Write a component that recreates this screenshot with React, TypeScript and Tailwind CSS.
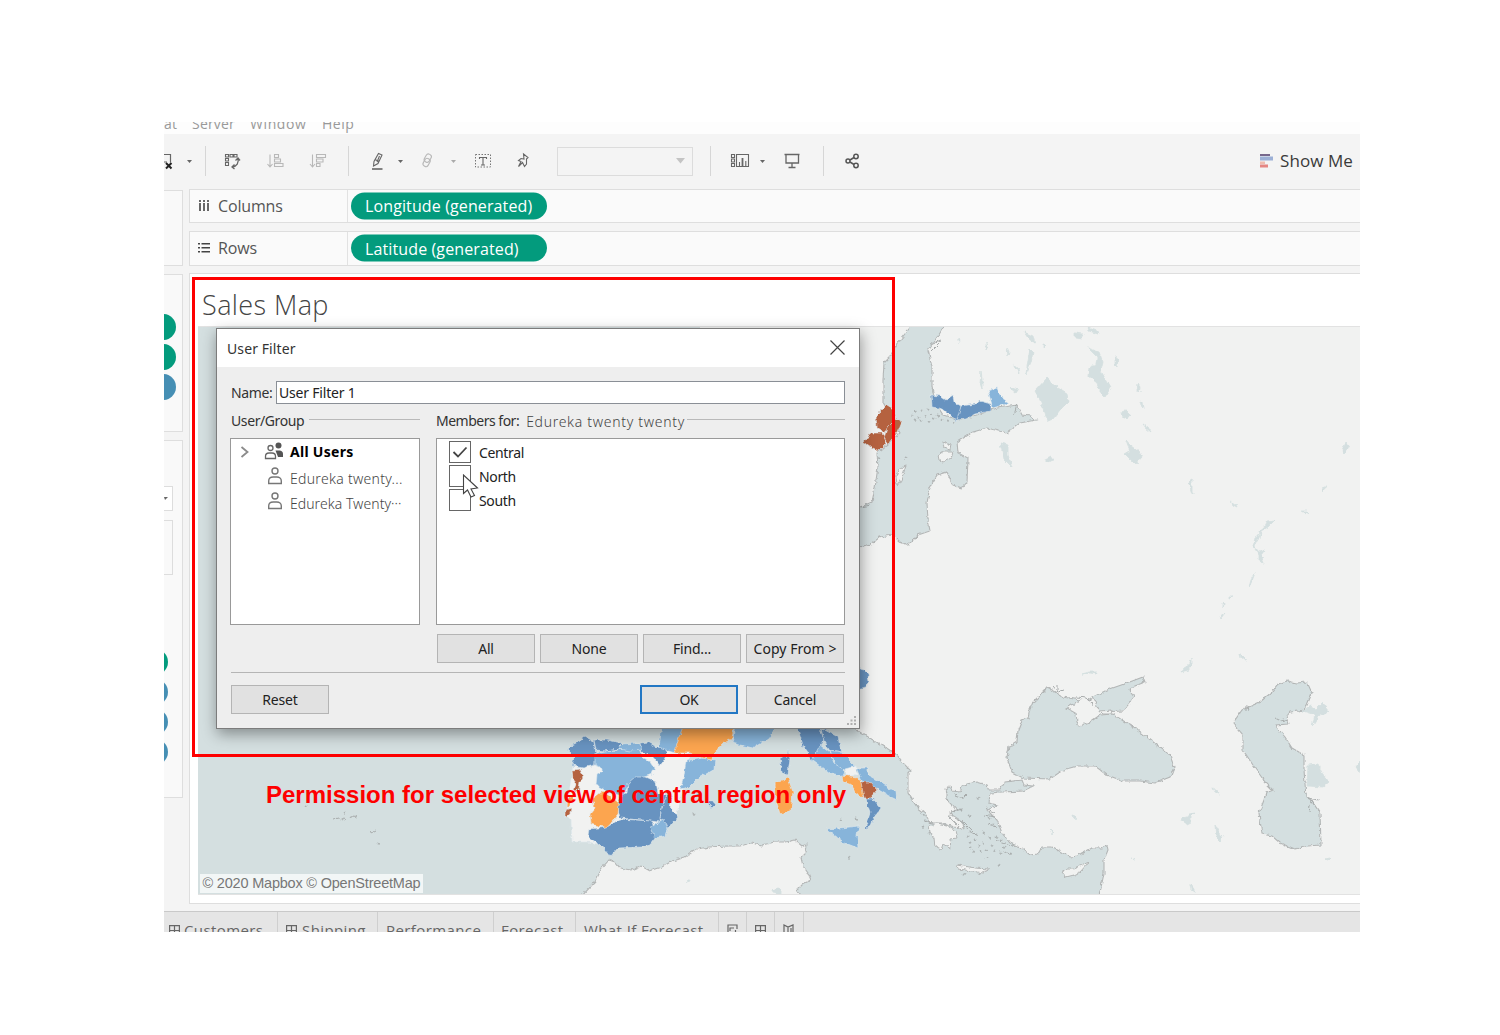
import React from "react";

const WATER = "#d4dfe0";
const LAND = "#f1f2f1";
const DARK = "#6893c0";
const LIGHT = "#87b4da";
const ORANGE = "#fca550";
const BROWN = "#b5623f";

const seas = [
  // Atlantic and Mediterranean
  "M180,600 L840,700 840,722 857,730 873,740 885,747 897,755 904,764 910,770 908,773 908,793 917,807 925,813 930,823 943,823 953,827 963,828 962,822 955,818 950,813 957,811 952,805 947,800 947,792 946,789 950,786 952,791 960,792 963,785 977,782 987,785 988,790 1000,790 1005,782 1022,780 1024,785 1033,786 1023,791 1003,792 990,793 989,803 997,805 987,810 997,820 1002,833 1010,843 1022,848 1030,855 1038,854 1042,847 1052,847 1063,853 1070,857 1077,856 1092,848 1102,848 1107,845 1108,850 1104,860 1104,873 1102,883 1098,900 805,900 797,890 803,884 811,880 808,873 803,866 801,858 806,853 807,844 802,846 795,840 786,842 775,842 762,845 751,843 740,846 726,846 710,847 697,849 685,857 672,861 662,867 650,871 641,866 632,870 620,868 615,862 609,860 602,868 595,882 580,898 L180,910 Z",
  // Baltic and Gulf of Finland
  "M913,324 L900,340 890,357 884,363 883,380 883,402 890,415 900,433 887,445 877,453 878,467 875,487 872,502 860,507 840,510 840,552 860,548 870,545 880,537 893,535 900,542 908,545 918,535 930,531 928,520 927,503 930,487 937,475 947,472 953,485 962,488 967,482 968,458 958,453 957,442 973,432 987,428 1007,433 1020,423 1036,420 1030,416 1022,415 1017,405 997,408 983,413 960,420 943,415 935,402 932,387 932,367 928,350 940,333 945,324 Z",
  // Black Sea
  "M1047,688 L1033,702 1030,709 1028,718 1022,720 1018,730 1017,742 1009,747 1007,758 1012,772 1023,778 1050,779 1063,770 1077,766 1095,766 1107,775 1123,781 1140,781 1155,783 1170,777 1174,767 1170,755 1157,745 1138,730 1122,720 1113,714 1100,715 1090,722 1080,726 1077,722 1076,713 1067,708 1080,700 1063,697 1055,692 Z",
  // Sea of Azov
  "M1093,697 L1107,690 1127,683 1143,677 1145,682 1135,686 1129,690 1134,697 1128,705 1123,711 1100,712 Z",
  // Caspian Sea
  "M1287,681 L1297,683 1307,682 1312,693 1305,710 1290,712 1287,716 1289,724 1275,725 1285,737 1292,748 1304,755 1304,770 1306,797 1311,800 1320,813 1321,845 1308,846 1295,849 1280,843 1272,836 1262,834 1259,813 1264,800 1266,793 1273,790 1265,782 1253,765 1243,750 1243,735 1233,723 1242,710 1260,702 1272,692 1277,685 Z",
];

const lakes = [
  "M1047,378 L1057,387 1067,393 1068,402 1060,410 1053,419 1048,421 1044,410 1040,400 1035,391 Z",
  "M1088,348 L1099,352 1103,362 1101,371 1106,380 1111,388 1105,397 1101,393 1097,383 1088,376 1089,368 1096,364 1097,357 Z",
  "M1000,443 L1008,445 1008,455 1012,467 1004,459 Z",
  "M1045,459 L1051,456 1054,460 1047,462 Z",
  "M1075,333 L1083,334 1081,339 1075,338 Z M1088,327 L1098,331 1099,334 1089,331 Z",
  "M1024,332 L1033,336 1035,344 1028,338 Z M1030,349 L1033,352 1031,362 1026,374 1028,360 Z M1007,347 l2,5 -1,4 Z M1013,364 l6,5 1,4 Z M1009,387 l9,3 -2,3 Z",
  "M981,371 l1,8 0,10 -2,-6 Z M959,339 l1,2 -1,2 Z M986,343 l1,5 -1,2 Z M1043,344 l3,1 -3,3 Z M1115,358 l3,1 -1,8 -2,-3 Z",
  "M1138,384 l2,3 -1,5 -2,-1 Z M1140,401 l3,2 1,6 -3,-4 Z M1121,412 l5,-1 4,4 -3,4 -5,-2 Z M1143,424 l5,3 3,5 -5,-4 Z",
  "M1126,440 L1132,447 1139,452 1142,457 1136,464 1131,460 1125,454 1130,451 Z",
  "M1190,479 l2,1 0,12 1,3 -2,-3 -2,-9 Z M1231,501 l5,4 1,2 -4,-2 Z",
  "M1346,442 l3,4 -3,6 -2,2 -2,-3 2,-4 Z M1322,488 l5,-2 -3,2 -2,4 Z M1301,511 l6,0 2,3 -5,-2 Z",
  "M1275,520 l-8,1 -3,6 -5,4 1,4 -5,3 -2,8 4,6 2,3 0,6 5,2 -3,-8 4,-5 -6,2 -5,-6 2,-5 4,-3 1,-7 7,-4 Z",
  "M1255,573 l-4,7 -2,7 3,-6 Z M1229,596 l4,0 -4,2 Z M1223,603 l1,1 -1,4 Z M1220,616 l5,-3 -4,5 Z M1240,653 l5,5 1,3 -5,-4 Z",
  "M1192,657 l-3,8 -5,3 -3,4 7,-2 4,-6 Z M1308,765 L1318,764 1322,773 1329,782 1323,787 1307,786 Z",
  "M1303,711 L1311,706 1316,709 1322,703 1329,712 1318,716 1312,726 1315,715 Z M1361,760 l-5,7 5,7 Z",
  "M1213,788 l5,3 2,3 -5,-2 Z M1182,818 l5,-1 2,-3 6,-1 -4,4 0,5 -4,2 -6,-4 Z M1215,825 l3,5 5,8 -3,3 -4,-4 Z M1190,884 l4,5 0,3 -3,-2 Z",
  "M1082,674 l7,-2 8,0 -1,2 -6,-1 Z M1073,815 l3,1 -1,4 Z M1050,829 l3,3 -1,2 Z M1131,858 l4,2 Z M1325,859 l5,-1 -2,2 Z M772,890 l6,-2 3,3 0,4 -8,-2 Z M687,881 l3,-2 -1,3 Z",
];

const islands = [
  "M929,826 L937,823 947,825 955,831 957,838 950,839 951,849 943,844 941,850 935,847 934,838 930,832 Z",
  "M957,865 L964,866 975,868 989,869 983,873 972,871 958,869 Z",
  "M1062,872 L1067,869 1073,869 1089,862 1080,872 1074,875 1066,877 Z",
  "M938,455 l6,-4 9,0 -2,7 -7,4 -5,-2 Z M943,442 l8,3 -1,5 -6,-2 Z M898,470 l8,-4 -5,14 -4,6 -1,-10 Z",
  "M1100,711 l12,-1 -1,4 -8,0 Z",
  "M948,816 l6,0 9,6 1,8 -5,-3 Z",
];

const regions: [string, string][] = [
  [LAND, "M573,765 L583,767 595,763 620,748 690,745 688,770 683,790 676,817 655,837 618,847 587,842 572,842 571,820 566,815 Z"],
  [DARK, "M567,750 L572,745 580,741 585,737 594,742 596,753 595,765 583,768 572,766 574,757 Z"],
  [DARK, "M594,740 L607,740 622,743 619,749 605,751 596,750 Z"],
  [LIGHT, "M595,753 L605,751 617,750 628,748 641,750 642,757 651,762 655,768 652,774 637,780 628,786 623,796 610,793 596,785 597,775 602,772 600,767 595,765 Z"],
  [LIGHT, "M619,749 L622,744 638,743 643,750 630,751 Z"],
  [DARK, "M640,743 L648,742 655,746 667,750 666,757 660,766 653,757 642,752 Z"],
  [DARK, "M628,783 L635,777 645,777 656,782 658,793 667,795 661,812 660,822 640,820 620,818 617,805 622,795 627,793 Z"],
  [ORANGE, "M592,799 L603,791 612,798 619,804 618,815 607,828 591,824 590,814 595,808 Z"],
  [DARK, "M589,829 L607,827 620,819 652,821 656,837 650,845 643,847 618,848 610,857 602,846 588,837 Z"],
  [DARK, "M667,794 L673,796 669,806 678,817 668,829 660,818 662,808 Z"],
  [LIGHT, "M650,828 L663,819 668,829 666,836 655,838 Z"],
  [LIGHT, "M686,761 L703,758 715,760 714,769 697,779 689,787 680,789 684,775 Z"],
  [LIGHT, "M662,724 L687,724 679,740 675,753 659,748 Z"],
  [ORANGE, "M684,724 L734,724 732,739 722,744 715,752 711,760 703,758 690,753 674,753 678,740 Z"],
  [LIGHT, "M735,726 L778,724 768,739 753,748 740,745 732,743 Z"],
  [DARK, "M796,724 L820,728 824,740 819,752 812,760 804,748 Z"],
  [DARK, "M821,728 L838,737 842,753 830,751 824,742 Z"],
  [LIGHT, "M820,745 L830,753 834,763 843,768 844,777 830,774 820,766 812,760 Z"],
  [LIGHT, "M830,751 L842,753 856,767 846,771 835,764 Z"],
  [LAND, "M845,769 L856,766 857,774 847,777 Z"],
  [LIGHT, "M856,768 L868,768 868,775 882,783 896,792 897,800 889,796 877,789 862,781 Z"],
  [ORANGE, "M842,775 L857,777 864,785 864,798 855,793 852,785 843,782 Z"],
  [BROWN, "M861,782 L870,782 877,790 870,798 864,798 Z"],
  [DARK, "M865,799 L873,799 881,808 874,818 871,826 865,829 870,813 Z"],
  [LIGHT, "M826,829 L840,828 859,826 857,835 858,848 845,843 Z"],
  [ORANGE, "M775,783 L788,778 793,792 791,811 780,814 776,800 Z"],
  [DARK, "M780,758 L787,756 788,749 790,758 788,775 782,773 Z"],
  [DARK, "M707,803 L713,800 716,804 712,808 Z M696,795 l4,-2 0,3 Z"],
  [BROWN, "M572,770 L582,769 580,774 583,777 580,782 579,790 574,791 576,783 573,779 Z M565,810 L571,808 570,814 565,818 Z"],
  [ORANGE, "M568,797 L574,797 570,806 567,806 Z"],
  [DARK, "M856,668 L864,670 868,674 869,682 866,687 856,689 Z"],
  [BROWN, "M876,416 L887,405 892,408 895,417 890,428 884,432 877,428 Z"],
  [BROWN, "M863,441 L872,433 883,433 886,444 879,451 871,447 Z"],
  [BROWN, "M887,428 L897,418 902,422 898,432 892,439 888,444 884,438 Z"],
  [DARK, "M931,395 L940,396 946,400 953,395 954,402 961,406 960,413 957,421 950,415 943,409 932,407 Z"],
  [DARK, "M961,406 L975,404 980,401 991,404 991,411 975,414 966,419 957,420 Z"],
  [LIGHT, "M988,391 L997,388 1001,397 1009,403 993,408 Z"],
];

// Small islets scattered along the coasts
const specks: [number, number][] = [
  [911, 415], [915, 411], [918, 417], [921, 410], [924, 416], [927, 408], [930, 414], [933, 418], [937, 415], [941, 419], [914, 419], [920, 420], [928, 421],
  [947, 420], [952, 422], [905, 457], [967, 836], [970, 842], [974, 839], [978, 846], [982, 843], [972, 850], [985, 850], [976, 834], [966, 828], [970, 832],
  [988, 838], [991, 845], [994, 850], [999, 852], [983, 832], [980, 851], [969, 847], [992, 823], [988, 818], [977, 798], [968, 815], [962, 797], [960, 809],
  [996, 836], [1000, 840], [1003, 847], [1009, 853], [986, 857], [998, 864], [978, 873], [963, 874], [305, 806], [343, 812], [350, 817], [378, 843],
  [693, 814], [848, 857], [840, 819], [855, 818], [1012, 845], [925, 820], [922, 826], [928, 832],
];

const openSans = "font-['Open_Sans',sans-serif]";

function SalesMap() {
  return (
    <svg className="block h-[567px] w-[1162px]" viewBox="198 327 1162 567">
      <defs>
        <filter id="coast" x="0" y="0" width="100%" height="100%">
          <feTurbulence type="fractalNoise" baseFrequency="0.22" numOctaves="2" seed="4" />
          <feDisplacementMap in="SourceGraphic" scale="4.5" xChannelSelector="R" yChannelSelector="G" />
        </filter>
      </defs>
      <rect x="198" y="327" width="1162" height="567" fill={LAND} />
      <g filter="url(#coast)">
        {seas.map((d, i) => (
          <path key={i} d={d} fill={WATER} stroke="#b3b6b6" strokeWidth="1.1" />
        ))}
        {lakes.map((d, i) => (
          <path key={i} d={d} fill={WATER} stroke={WATER} strokeWidth="0.8" />
        ))}
        {islands.map((d, i) => (
          <path key={i} d={d} fill={LAND} stroke="#b3b6b6" strokeWidth="1" />
        ))}
        {specks.map(([x, y], i) => (
          <path key={i} d={`M${x},${y}l2,0.5l-1,1.2z`} fill="#e4e8e8" stroke="#a4a9a9" strokeWidth="0.8" />
        ))}
        {regions.map(([fill, d], i) => (
          <path key={i} d={d} fill={fill} stroke="#dfe9ef" strokeWidth="0.6" />
        ))}
        <path
          d="M334,819l4,-1l3,2l4,-2 M351,817l3,-1l2,1 M369,831l3,2l4,-2 M1076,697l10,1l7,2 M1088,699l6,8 M1053,686l5,6l6,-2 M1057,684v8 M1243,708l5,-2l1,5 M1246,705v6 M1307,798l12,2 M1309,812l2,-12l4,6 M1275,718l6,3l8,-2 M952,812l10,-3 M955,818l9,5l12,12 M986,808l9,5 M985,815l10,2 M988,824l9,3 M996,840l14,6 M1002,851l8,3 M920,813l6,4 M924,820l8,3 M913,800l6,8 M955,795l8,3l4,-4 M929,345l12,-5 M931,352l8,-8 M871,505l-10,2 M877,455l3,4 M1017,405l-3,10"
          fill="none"
          stroke="#a7abab"
          strokeWidth="1"
        />
      </g>
      <path d="M198,327 H700 V727 H198 Z" fill={WATER} />
    </svg>
  );
}

function Cell({ className, children }: { className: string; children?: React.ReactNode }) {
  return <div className={`flex h-full shrink-0 items-center justify-center ${className}`}>{children}</div>;
}

function Sep({ className }: { className: string }) {
  return (
    <Cell className={className}>
      <div className="mr-px h-[30px] w-px bg-[#d6d6d6]" />
    </Cell>
  );
}

function Caret({ className }: { className: string }) {
  return (
    <Cell className={className}>
      <svg width="5" height="3" viewBox="0 0 5 3">
        <path d="M0 0h5L2.5 3z" fill="currentColor" />
      </svg>
    </Cell>
  );
}

function Icon({ children }: { children: React.ReactNode }) {
  return (
    <svg width="20" height="18" viewBox="0 0 20 18" fill="none" stroke="currentColor" strokeWidth="1.1" className="shrink-0">
      {children}
    </svg>
  );
}

function Toolbar() {
  return (
    <div className="flex h-[54px] items-center bg-[#f4f4f4] text-[#666]">
      <Cell className="w-[15px] justify-start overflow-hidden">
        <svg width="10" height="18" viewBox="0 0 10 18" fill="none" stroke="#666" strokeWidth="1.2">
          <path d="M0 2.500h6.500v8M0 10h3" />
          <path d="M2 11l5.500 5.500M7.500 11L2 16.500" stroke="#222" strokeWidth="2" />
        </svg>
      </Cell>
      <Caret className="w-5" />
      <Sep className="w-[14px]" />
      <Cell className="w-[38px]">
        <Icon>
          <path d="M3.500 2.500h3v2.500h-3zM8 2.500h3v2.500h-3zM12 2.500h3v2.500h-3zM3.500 6.500h3v2.500h-3zM3.500 10.500h3v3h-3z" />
          <path d="M16 6.500c1 4 -1 8 -6 8.500M13.500 8.500l2.500 -2.500l2 2.500M12.500 12.500l-2.500 2.500l2.500 2" strokeWidth="1.300" />
        </Icon>
      </Cell>
      <Cell className="w-[50px] text-[#b8b8b8]">
        <Icon>
          <path d="M4 2.500v12M1.500 12l2.500 3l2.500 -3M8.500 2.500h4v3h-4zM8.500 7h6v3h-6zM8.500 11.500h8.500v3h-8.500z" />
        </Icon>
      </Cell>
      <Cell className="w-[34px] text-[#b8b8b8]">
        <Icon>
          <path d="M4.500 2.500v12M2 12l2.500 3l2.500 -3M8.500 2.500h9v3h-9zM8.500 7h6.500v3h-6.500zM8.500 11.500h3.500v3h-3.500z" />
        </Icon>
      </Cell>
      <Sep className="w-7" />
      <Cell className="w-7">
        <Icon>
          <path d="M6.500 14l0.500 -4.500l4.500 -8l3.500 1.500l-4 8.500zM8 7.500l4 2M10 10l2.500 -6" />
          <path d="M5 17h10.500" strokeWidth="1.600" />
        </Icon>
      </Cell>
      <Caret className="w-[18px]" />
      <Cell className="w-9 text-[#b8b8b8]">
        <Icon>
          <rect x="8" y="1.500" width="5.500" height="8.500" rx="2.500" transform="rotate(30 10 6)" />
          <rect x="6.500" y="6" width="5.500" height="8.500" rx="2.500" transform="rotate(30 9 11)" />
        </Icon>
      </Cell>
      <Caret className="w-4 text-[#aaa]" />
      <Cell className="w-11">
        <Icon>
          <rect x="2.500" y="2.500" width="15" height="12.500" strokeDasharray="1.500 1.500" strokeWidth="0.900" />
          <path d="M6.500 7v-1.500h7v1.500M10 5.500v7.500M8 13h4" />
        </Icon>
      </Cell>
      <Cell className="w-9">
        <Icon>
          <path d="M10.500 2l4.500 3.500l-1.500 1.500v5l-2 2.500l-2 -4l-4 4l2.500 -5l-2.500 -1l2.500 -2l3 0.500z" />
        </Icon>
      </Cell>
      <div className="ml-4 flex h-[29px] w-[136px] shrink-0 items-center justify-end border border-[#dcdcdc] pr-[7px] text-[#c4c4c4]">
        <svg width="9" height="6" viewBox="0 0 9 6">
          <path d="M0 0h9L4.500 5.500z" fill="currentColor" />
        </svg>
      </div>
      <Sep className="w-9" />
      <Cell className="w-[22px]">
        <Icon>
          <path d="M1.500 2.500h3v3h-3zM1.500 7h3v3h-3zM1.500 11.500h3v3h-3zM6.500 2.500h12v12h-12zM9.500 14v-4M15.800 14v-5" />
          <path d="M12.500 14v-8" strokeWidth="1.800" />
        </Icon>
      </Cell>
      <Caret className="w-[22px]" />
      <Cell className="w-[38px]">
        <Icon>
          <path d="M2.500 2.500h15M4 2.500v8.500h12.500v-8.500M10 11v4M6.500 15.500h7" strokeWidth="1.300" />
        </Icon>
      </Cell>
      <Sep className="w-[26px]" />
      <Cell className="w-[30px]">
        <Icon>
          <g strokeWidth="1.500" stroke="#555">
            <circle cx="6" cy="9" r="2" />
            <circle cx="14" cy="4.500" r="2.200" />
            <circle cx="14" cy="13.500" r="2.200" />
            <path d="M8 8l4 -2.500M8 10l4 2.500" />
          </g>
        </Icon>
      </Cell>
      <div className="ml-auto flex items-center gap-[7px] pr-[7px]">
        <svg width="13" height="14" viewBox="0 0 13 14">
          <path d="M0 0h10v2h-10z" fill="#77688c" />
          <path d="M0 2.500h13v4h-13z" fill="#9cb0d6" />
          <path d="M0 7.500h5v2.500h-5z" fill="#eebdb0" />
          <path d="M0 10.500h8v3h-8z" fill="#e58683" />
        </svg>
        <span className="-mt-px font-['Open_Sans',sans-serif] text-[17px] leading-none tracking-[0.08px] text-[#3a3a3a]">Show Me</span>
      </div>
    </div>
  );
}

function Shelf({ label, pill, icon, tall }: { label: string; pill: string; icon: React.ReactNode; tall?: boolean }) {
  return (
    <div className={`flex items-stretch border border-r-0 border-[#dedede] bg-[#fafafa] ${tall ? "h-[35px]" : "h-[34px]"}`}>
      <div className="flex w-[158px] items-center border-r border-[#e2e2e2] pl-2">
        <div className="w-5 pb-px">{icon}</div>
        <span className={`${openSans} pb-px text-[16px] leading-none tracking-[-0.15px] text-[#555]`}>{label}</span>
      </div>
      <div className="ml-[3px] flex h-[27px] w-[196px] -translate-y-[0.5px] items-center self-center rounded-full bg-[#039b7d] pl-[14px]">
        <span className={`${openSans} text-[16px] leading-none tracking-[0.12px] whitespace-nowrap text-white`}>{pill}</span>
      </div>
    </div>
  );
}

function PersonIcon() {
  return (
    <svg width="16" height="18" viewBox="0 0 16 18" fill="none" stroke="#777" strokeWidth="1.400" className="-mt-[2px]">
      <circle cx="8" cy="4" r="3" />
      <path d="M1.700 16.500v-2.500c0 -2.500 2 -4 4.500 -4h3.600c2.500 0 4.500 1.500 4.500 4v2.500z" />
    </svg>
  );
}

function GroupIcon() {
  return (
    <svg width="20" height="18" viewBox="0 0 20 18" fill="none" stroke="#666" strokeWidth="1.300" className="-mt-[3px]">
      <circle cx="14.500" cy="3.500" r="3" fill="#555" stroke="none" />
      <path d="M11.500 8.500h4c2 0 3.500 1.500 3.500 3v3.500h-5z" fill="#555" stroke="none" />
      <circle cx="6.500" cy="6" r="2.500" />
      <path d="M1.500 16.500v-2c0 -2 1.500 -3.500 3.500 -3.500h3c2 0 3.500 1.500 3.500 3.500v2z" />
    </svg>
  );
}

function CheckRow({ label, checked }: { label: string; checked?: boolean }) {
  return (
    <div className="flex h-6 items-center">
      <div className="-mt-[2px] flex h-[22px] w-[22px] items-center justify-center border border-[#666] bg-white">
        {checked && (
          <svg width="16" height="14" viewBox="0 0 16 14" fill="none" stroke="#444" strokeWidth="1.800">
            <path d="M1.500 7l4.500 4.500l8.500 -9" />
          </svg>
        )}
      </div>
      <span className="ml-2 text-[14px] leading-none tracking-[-0.35px] text-[#222]">{label}</span>
    </div>
  );
}

function Button({ children, primary }: { children: React.ReactNode; primary?: boolean }) {
  return (
    <button
      className={`flex w-[98px] items-center justify-center whitespace-nowrap bg-[#e1e1e1] text-[14px] leading-none tracking-[-0.2px] text-[#222] ${
        primary ? "border-2 border-[#2277c4]" : "border border-[#b4b4b4]"
      }`}
    >
      {children}
    </button>
  );
}

function UserFilterDialog() {
  return (
    <div className="absolute left-[52px] top-[206px] flex h-[401px] w-[644px] flex-col border border-[#7c7c7c] bg-[#eee] font-['Noto_Sans',sans-serif] tracking-[-0.3px] shadow-[1px_5px_14px_rgba(0,0,0,0.38)]">
      <div className="flex h-[38px] shrink-0 items-center justify-between bg-white pl-[10px] pr-[14px]">
        <span className="pt-[2px] text-[14px] leading-none tracking-[0.1px] text-[#333]">User Filter</span>
        <svg width="15" height="15" viewBox="0 0 15 15" stroke="#444" strokeWidth="1.200" className="-mt-px">
          <path d="M0.500 0.500l14 14M14.500 0.500l-14 14" />
        </svg>
      </div>
      <div className="mt-[14px] flex h-[23px] items-center pl-[14px] pr-[14px]">
        <span className="w-[45px] text-[14px] leading-none tracking-[-0.4px] text-[#333]">Name:</span>
        <div className="flex h-full flex-1 items-center border border-[#8a8f96] bg-white pl-[2px]">
          <span className="text-[14px] leading-none tracking-[-0.2px] text-[#222]">User Filter 1</span>
        </div>
      </div>
      <div className="mt-[6px] flex pl-[13px] pr-[14px]">
        <div className="w-[190px]">
          <div className="flex h-[28px] items-center gap-[5px] pb-[6px]">
            <span className="pl-px text-[14px] leading-none tracking-[-0.4px] text-[#333]">User/Group</span>
            <div className="mb-[3px] h-px flex-1 bg-[#b9b9b9]" />
          </div>
          <div className="flex h-[187px] flex-col border border-[#999] bg-white pt-px">
            <div className="flex h-6 items-center pl-[9px]">
              <svg width="10" height="12" viewBox="0 0 10 12" fill="none" stroke="#8b8b8b" strokeWidth="1.800" className="-mt-px">
                <path d="M1.500 1l6 5l-6 5" />
              </svg>
              <div className="ml-[14px] w-[26px]">
                <GroupIcon />
              </div>
              <span className="pb-px text-[14px] font-bold leading-none tracking-[0.3px] text-black">All Users</span>
            </div>
            <div className="flex h-[25px] items-center pl-9">
              <div className="w-[23px]">
                <PersonIcon />
              </div>
              <span className="pt-[5px] text-[14px] font-light leading-none tracking-[0.3px] text-[#444]">Edureka twenty...</span>
            </div>
            <div className="flex h-[25px] items-center pl-9">
              <div className="w-[23px]">
                <PersonIcon />
              </div>
              <span className="pt-[4px] text-[14px] font-light leading-none tracking-[0.05px] text-[#444]">Edureka Twenty···</span>
            </div>
          </div>
        </div>
        <div className="ml-4 flex-1">
          <div className="flex h-[28px] items-center pb-[6px]">
            <span className="text-[14px] leading-none tracking-[-0.5px] text-[#333]">Members for:</span>
            <span className="ml-[7px] pt-px text-[14px] font-light leading-none tracking-[0.7px] text-[#444]">Edureka twenty twenty</span>
            <div className="mb-[3px] ml-[2px] h-px flex-1 bg-[#b9b9b9]" />
          </div>
          <div className="h-[187px] border border-[#999] bg-white pl-3 pt-[2px]">
            <CheckRow label="Central" checked />
            <CheckRow label="North" />
            <CheckRow label="South" />
          </div>
        </div>
      </div>
      <div className="mt-[9px] flex h-[29px] items-stretch justify-end gap-[5px] pr-[15px]">
        <Button>All</Button>
        <Button>None</Button>
        <Button>Find...</Button>
        <Button>
          <span className="tracking-[0.05px]">Copy From &gt;</span>
        </Button>
      </div>
      <div className="ml-[14px] mr-[14px] mt-[9px] h-px bg-[#b5b5b5]" />
      <div className="mt-[12px] flex h-[29px] items-stretch pl-[14px] pr-[15px]">
        <Button>Reset</Button>
        <div className="ml-auto flex gap-[8px]">
          <Button primary>OK</Button>
          <Button>Cancel</Button>
        </div>
      </div>
      <svg className="absolute bottom-[2px] right-[2px]" width="10" height="10" viewBox="0 0 10 10" fill="#b0b0b0">
        <path d="M7 0h2v2h-2zM7 3.500h2v2h-2zM7 7h2v2h-2zM3.500 3.500h2v2h-2zM3.500 7h2v2h-2zM0 7h2v2h-2z" />
      </svg>
      <svg className="absolute left-[245px] top-[145px]" width="18" height="26" viewBox="0 0 18 26" fill="#fff" stroke="#444" strokeWidth="1.100">
        <path d="M1.500 1v18.500l4 -3.500l3.500 7l3.500 -1.500l-3.500 -6.500l6.500 -1z" />
      </svg>
    </div>
  );
}

// A field pill of which only the right end shows
function PillEnd({ className }: { className: string }) {
  return (
    <div className="flex h-[26px] justify-end overflow-hidden">
      <div className={`h-full w-[60px] shrink-0 rounded-full ${className}`} />
    </div>
  );
}

function SidePanels() {
  return (
    <div className="flex w-[19px] shrink-0 flex-col pt-[2px]">
      <div className="h-[76px] border border-l-0 border-[#dedede] bg-[#f9f9f9]" />
      <div className="mt-2 h-[158px] border border-l-0 border-[#dedede] bg-[#f9f9f9] pt-[39px]">
        <div className="flex w-3 flex-col gap-1">
          <PillEnd className="bg-[#039b7d]" />
          <PillEnd className="bg-[#039b7d]" />
          <PillEnd className="bg-[#468fb4]" />
        </div>
      </div>
      <div className="mt-2 flex h-[358px] flex-col border border-l-0 border-[#dedede] bg-[#f9f9f9] pt-[45px]">
        <div className="flex h-[25px] w-[9px] items-center border border-l-0 border-[#ddd] bg-white">
          <svg width="4" height="3" viewBox="0 0 4 3">
            <path d="M0 0h4L1 3z" fill="#666" />
          </svg>
        </div>
        <div className="mt-[9px] h-[55px] w-[9px] border border-l-0 border-[#ddd]" />
        <div className="mt-[74px] flex w-1 flex-col gap-1">
          <PillEnd className="bg-[#039b7d]" />
          <PillEnd className="bg-[#468fb4]" />
          <PillEnd className="bg-[#468fb4]" />
          <PillEnd className="bg-[#468fb4]" />
        </div>
      </div>
    </div>
  );
}

function SheetIcon() {
  return (
    <svg width="11" height="11" viewBox="0 0 11 11" fill="none" stroke="#666" strokeWidth="1.200" className="shrink-0">
      <path d="M0.600 0.600h9.800v9.800h-9.800zM5.500 0.600v9.800M0.600 5.500h9.800" />
    </svg>
  );
}

function Tab({ className, children }: { className: string; children: React.ReactNode }) {
  return (
    <div className={`flex h-9 shrink-0 items-center whitespace-nowrap border-r border-[#cfcfcf] ${openSans} text-[15px] leading-none tracking-[0.4px] text-[#666] ${className}`}>
      {children}
    </div>
  );
}

export default function App() {
  return (
    <div className="h-[1035px] w-[1500px] overflow-hidden bg-white pl-[164px] pt-[122px]">
      <div className="relative flex h-[810px] w-[1196px] flex-col overflow-hidden bg-[#f4f4f4]">
        <div className={`h-3 shrink-0 overflow-hidden bg-[#fdfdfd] ${openSans} text-[14px] text-[#999]`}>
          <div className="-mt-[6px] flex h-4 items-center leading-4 tracking-[0.2px]">
            <span className="w-7">at</span>
            <span className="w-[58px]">Server</span>
            <span className="w-[72px] tracking-[0.6px]">Window</span>
            <span className="tracking-[0.5px]">Help</span>
          </div>
        </div>
        <Toolbar />
        <div className="flex h-[723px] shrink-0">
          <SidePanels />
          <div className="ml-[6px] flex flex-1 flex-col pt-px">
            <Shelf
              label="Columns"
              pill="Longitude (generated)"
              icon={
                <svg width="12" height="12" viewBox="0 0 12 12" fill="#666">
                  <path d="M1 0h2v2h-2zM5 0h2v2h-2zM9 0h2v2h-2zM1 3h2v8h-2zM5 3h2v8h-2zM9 3h2v8h-2z" />
                </svg>
              }
            />
            <div className="h-2 shrink-0" />
            <Shelf
              tall
              label="Rows"
              pill="Latitude (generated)"
              icon={
                <svg width="12" height="12" viewBox="0 0 12 12" fill="#444">
                  <path d="M0 1h2v1.600h-2zM0 5h2v1.600h-2zM0 9h2v1.600h-2zM3.500 1h8.500v1.600h-8.500zM3.500 5h8.500v1.600h-8.500zM3.500 9h8.500v1.600h-8.500z" />
                </svg>
              }
            />
            <div className="mt-[7px] h-[631px] border border-r-0 border-[#dedede] bg-white pl-2">
              <div className="flex h-[52px] items-center pl-1">
                <span className="pt-[9px] font-['Open_Sans',sans-serif] text-[27px] font-light leading-none tracking-[0.4px] text-[#444]">Sales Map</span>
              </div>
              <div className="relative border-b border-t border-[#e2e2e2]">
                <SalesMap />
                <div className="absolute bottom-px left-[2px] flex h-[19px] w-[223px] items-center justify-center bg-white/70">
                  <span className="font-['Liberation_Sans',sans-serif] text-[14.5px] leading-none tracking-[-0.2px] whitespace-nowrap text-[#777]">
                    © 2020 Mapbox © OpenStreetMap
                  </span>
                </div>
              </div>
            </div>
          </div>
        </div>
        <div className="flex h-[21px] shrink-0 items-start overflow-hidden border-t border-[#c9c9c9] bg-[#e5e5e5]">
          <Tab className="w-[114px] gap-[4px] pl-[5px]">
            <SheetIcon />
            Customers
          </Tab>
          <Tab className="w-[100px] gap-[5px] pl-2">
            <SheetIcon />
            Shipping
          </Tab>
          <Tab className="w-[116px] pl-2">Performance</Tab>
          <Tab className="w-[82px] pl-[7px]">Forecast</Tab>
          <Tab className="w-[143px] pl-2">What If Forecast</Tab>
          <Tab className="w-[28px] justify-center">
            <svg width="12" height="12" viewBox="0 0 12 12" fill="none" stroke="#666" strokeWidth="1.200">
              <path d="M6 10.500h-5v-9.500h9v4M3 7v-3h4M6 8.500h5M8.500 6v5" />
            </svg>
          </Tab>
          <Tab className="w-[28px] justify-center">
            <SheetIcon />
          </Tab>
          <Tab className="w-[29px] justify-center">
            <svg width="12" height="12" viewBox="0 0 12 12" fill="none" stroke="#666" strokeWidth="1.200">
              <path d="M1 11v-10l4 2l5 -2v10M5 3v8M8 4v7" />
            </svg>
          </Tab>
        </div>

        <UserFilterDialog />
        <div className="absolute left-7 top-[155px] h-[480px] w-[703px] border-[3px] border-[#fe0000]" />
        <div className="absolute left-[102px] top-[659px] whitespace-nowrap font-['Liberation_Sans',sans-serif] text-[24px] font-bold leading-[28px] text-[#fe0000]">
          Permission for selected view of central region only
        </div>
      </div>
    </div>
  );
}
